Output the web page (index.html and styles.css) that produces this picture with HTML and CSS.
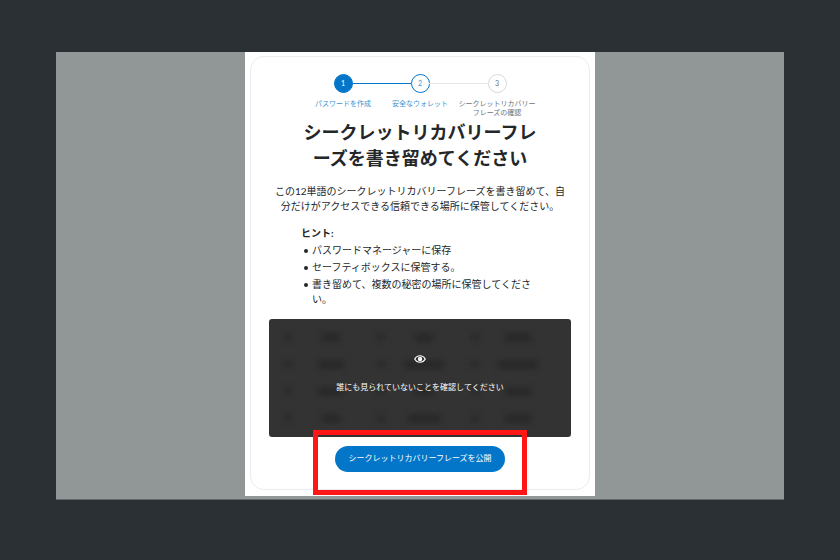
FILE: index.html
```html
<!DOCTYPE html>
<html lang="ja">
<head>
    <meta charset="UTF-8">
    <meta name="viewport" content="width=device-width, initial-scale=1.0">
    <title>シークレットリカバリーフレーズ</title>
    <link rel="stylesheet" href="styles.css">
</head>
<body>
  <div class="stage">
    <main class="panel">
      <div class="card">

        <ol class="steps">
          <li class="step done"><span class="circle">1</span><span class="label">パスワードを作成</span></li>
          <li class="step current"><span class="circle">2</span><span class="label">安全なウォレット</span></li>
          <li class="step"><span class="circle">3</span><span class="label">シークレットリカバリーフレーズの確認</span></li>
        </ol>

        <h1>シークレットリカバリーフレーズを書き留めてください</h1>

        <p class="intro">この12単語のシークレットリカバリーフレーズを書き留めて、自分だけがアクセスできる信頼できる場所に保管してください。</p>

        <div class="hints">
          <h2>ヒント:</h2>
          <ul>
            <li>パスワードマネージャーに保存</li>
            <li>セーフティボックスに保管する。</li>
            <li>書き留めて、複数の秘密の場所に保管してください。</li>
          </ul>
        </div>

        <div class="phrase">
          <!-- hidden words -->
          <div class="words" aria-hidden="true">
            <div class="word"><i></i><b class="short"></b></div>
            <div class="word"><i></i><b class="short"></b></div>
            <div class="word"><i></i><b></b></div>
            <div class="word"><i></i><b></b></div>
            <div class="word"><i></i><b class="long"></b></div>
            <div class="word"><i></i><b class="long"></b></div>
            <div class="word"><i></i><b></b></div>
            <div class="word"><i></i><b class="short"></b></div>
            <div class="word"><i></i><b></b></div>
            <div class="word"><i></i><b class="short"></b></div>
            <div class="word"><i></i><b class="medium"></b></div>
            <div class="word"><i></i><b></b></div>
          </div>
          <div class="cover">
            <svg class="eye" viewBox="0 0 24 16" aria-hidden="true">
              <path d="M1.500 8C3.600 4 7.500 1.500 12 1.500S20.400 4 22.500 8C20.400 12 16.500 14.500 12 14.500S3.600 12 1.500 8Z" fill="none" stroke="#fff" stroke-width="2.400"/>
              <circle cx="12" cy="8" r="4.400" fill="#fff"/>
              <circle cx="10.600" cy="6.400" r="1" fill="#aaa"/>
            </svg>
            <p>誰にも見られていないことを確認してください</p>
          </div>
        </div>

        <div class="action">
          <button type="button">シークレットリカバリーフレーズを公開</button>
        </div>

      </div>
    </main>
  </div>
</body>
</html>
```
FILE: styles.css
```css
*,
*::before,
*::after {
  box-sizing: border-box;
}

body {
  margin: 0;
  padding: 52px 56px 61px;
  background-color: #2b3034;
  color: #24272a;
  font-family: Lato, "Noto Sans CJK JP", sans-serif;
  font-size: 10px;
  line-height: 15px;
}

.stage {
  display: flex;
  justify-content: center;
  padding-bottom: 3px;
  background-color: #919796;
  border-bottom: 1px solid #626a6d;
}

.panel {
  width: 100%;
  max-width: 350px;
  padding: 4px 5px 6px;
  background-color: #fff;
}

.card {
  padding: 17px 18px;
  border: 1px solid #ececee;
  border-radius: 14px;
}

.steps {
  display: flex;
  justify-content: center;
  margin: 0;
  padding: 0;
  list-style: none;
}

.step {
  position: relative;
  display: flex;
  flex-direction: column;
  align-items: center;
  width: 77px;
  color: #6a737d;
  font-size: 7px;
  line-height: 9px;
  text-align: center;
}

/* line to the next circle */
.step:not(:last-child)::after {
  content: "";
  position: absolute;
  top: 9px;
  left: calc(50% + 9px);
  width: calc(100% - 18px);
  height: 1px;
  background-color: #e4e6e8;
}

.step.done:not(:last-child)::after {
  background-color: #0376c9;
}

.circle {
  display: flex;
  align-items: center;
  justify-content: center;
  width: 19px;
  height: 19px;
  margin-bottom: 6px;
  border: 1px solid #d6d9dc;
  border-radius: 50%;
}

.done,
.current {
  color: #3d94d5;
}

.current .circle {
  border-color: #0376c9;
}

.done .circle {
  border-color: #0376c9;
  background-color: #0376c9;
  color: #fff;
}

h1 {
  margin: 2px 31px 0;
  font-size: 18px;
  line-height: 26px;
  font-weight: bold;
  text-align: center;
}

.intro {
  margin: 13px 2px 0;
  padding: 0 2px;
  text-align: center;
}

.hints {
  margin: 12px 31px 0 32px;
}

.hints h2 {
  margin: 0;
  font-size: 10px;
  line-height: 15px;
}

.hints ul {
  margin: 0;
  padding: 0 0 0 3px;
  list-style: none;
}

.hints li {
  display: flex;
  gap: 4px;
  margin-top: 2px;
}

.hints li::before {
  content: "";
  flex: none;
  width: 4px;
  height: 4px;
  margin-top: 6px;
  border-radius: 50%;
  background-color: #24272a;
}

.phrase {
  position: relative;
  margin-top: 12px;
  border-radius: 3px;
  background-color: #333;
  overflow: hidden;
}

.words {
  display: grid;
  grid-template-columns: repeat(3, 1fr);
  gap: 9px 8px;
  padding: 9px 18px 10px 12px;
  filter: blur(3px);
}

.word {
  display: flex;
  align-items: center;
  height: 18px;
}

.word i {
  width: 8px;
  height: 6px;
  margin: 0 4px 0 3px;
  background-color: #282828;
}

.word b {
  width: 26px;
  height: 7px;
  margin: 0 auto;
  background-color: #262626;
}

.word .short {
  width: 18px;
}

.word .medium {
  width: 33px;
}

.word .long {
  width: 40px;
}

.cover {
  position: absolute;
  inset: 0;
  display: flex;
  flex-direction: column;
  align-items: center;
  justify-content: center;
  gap: 17px;
  padding-bottom: 7px;
  color: #fff;
  font-size: 8px;
  line-height: 15px;
}

.cover p {
  margin: 0;
}

.eye {
  width: 12px;
  height: 8px;
}

.action {
  position: relative;
  display: flex;
  justify-content: center;
  margin-top: 9px;
}

/* highlight frame around the button */
.action::after {
  content: "";
  position: absolute;
  top: -16px;
  bottom: -23px;
  left: 50%;
  width: 214px;
  border: 5px solid #ff1616;
  transform: translateX(-50%);
  pointer-events: none;
}

button {
  height: 26px;
  padding: 0 13px 3px;
  border: none;
  border-radius: 13px;
  background-color: #0376c9;
  color: #fff;
  font-family: inherit;
  font-size: 8px;
  cursor: pointer;
}
```
